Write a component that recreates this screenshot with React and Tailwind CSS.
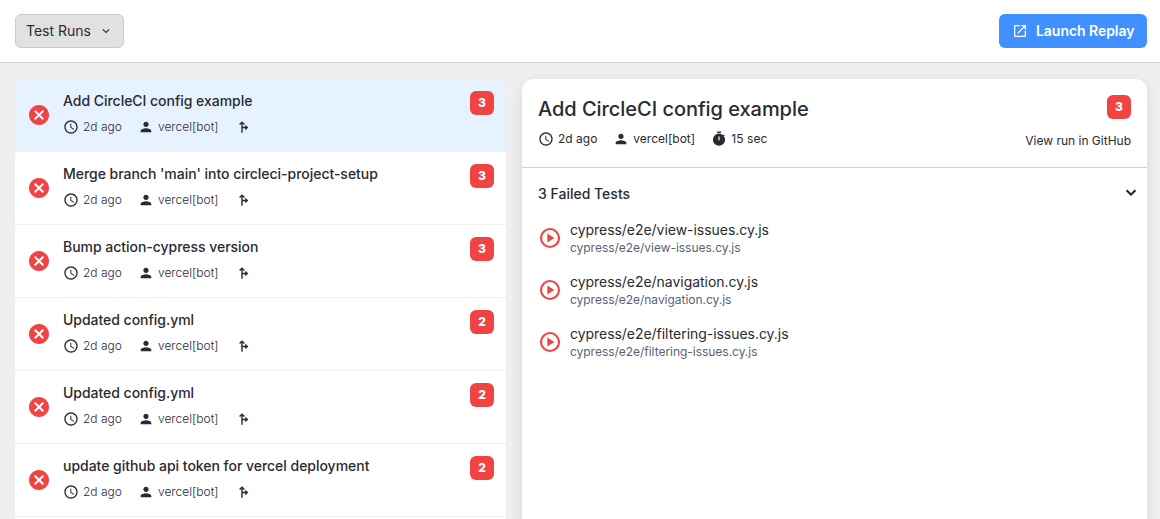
import { MdSchedule, MdPerson, MdCancel, MdLaunch, MdExpandMore } from "react-icons/md";

const RUNS = [
  { title: "Add CircleCI config example", fails: 3, selected: true },
  { title: "Merge branch 'main' into circleci-project-setup", fails: 3 },
  { title: "Bump action-cypress version", fails: 3 },
  { title: "Updated config.yml", fails: 2 },
  { title: "Updated config.yml", fails: 2 },
  { title: "update github api token for vercel deployment", fails: 2 },
];

const TESTS = [
  "cypress/e2e/view-issues.cy.js",
  "cypress/e2e/navigation.cy.js",
  "cypress/e2e/filtering-issues.cy.js",
];

function Badge({ count }) {
  return (
    <div className="flex h-6 w-6 shrink-0 items-center justify-center rounded-md bg-[#f04342] pb-px text-[12px] font-extrabold text-white">
      {count}
    </div>
  );
}

function BranchIcon() {
  return (
    <svg viewBox="0 0 12 14" className="h-3.5 w-3 shrink-0" fill="none" stroke="#2a2a33" strokeWidth="1.4">
      <path d="M4 12.8V2.5M4 7.5h4.5" />
      <path d="M1.6 4.6 4 2.2l2.4 2.4" />
      <path d="M7.2 4.8v5.4l3.2-2.7z" fill="#2a2a33" stroke="none" />
    </svg>
  );
}

function StopwatchIcon() {
  return (
    <svg viewBox="0 0 16 16" className="h-4 w-4 shrink-0">
      <path d="M6 1.2h4" stroke="#2a2a33" strokeWidth="1.4" />
      <path d="m12.1 3.9 1 1" stroke="#2a2a33" strokeWidth="1.4" />
      <circle cx="8" cy="8.7" r="6.1" fill="#2a2a33" />
      <path d="M8 5.4v3.8" stroke="#fff" strokeWidth="1.2" />
    </svg>
  );
}

function PlayIcon() {
  return (
    <svg viewBox="0 0 24 24" className="h-6 w-6 shrink-0">
      <circle cx="12" cy="12" r="9" fill="none" stroke="#f04342" strokeWidth="2.1" />
      <path d="M9.3 7.6v8.8l7.1-4.4z" fill="#f04342" />
    </svg>
  );
}

function Run({ run }) {
  return (
    <div className={`flex h-[73px] shrink-0 rounded-xs border-b border-[#efefef] px-3 ${run.selected ? "bg-[#e6f3ff]" : "bg-white"}`}>
      <MdCancel className="mt-6 h-6 w-6 shrink-0 text-[#f04342]" />
      <div className="ml-3 min-w-0 grow pt-3">
        <div className="text-[14px] leading-5 font-medium tracking-[-0.03px]">{run.title}</div>
        <div className="mt-[7px] flex h-[18px] items-center text-[12px] leading-[18px] font-light">
          <MdSchedule className="h-4 w-4 shrink-0" />
          <span className="ml-1">2d ago</span>
          <MdPerson className="ml-4 h-4 w-4 shrink-0" />
          <span className="mr-5 ml-1 tracking-[0.03px]">vercel[bot]</span>
          <BranchIcon />
        </div>
      </div>
      <div className="pt-3">
        <Badge count={run.fails} />
      </div>
    </div>
  );
}

export default function App() {
  return (
    <div className="flex h-[519px] w-[1160px] flex-col overflow-hidden bg-[#efefef] font-[Inter,sans-serif] text-[#2a2a33]">
      <header className="flex h-[63px] shrink-0 items-start justify-between border-b border-[#d0d0d3] bg-white pt-3.5 pr-[13px] pl-[15px]">
        <button className="flex h-[34px] w-[109px] items-center rounded-md border border-[#c9c9d2] bg-[#e1e1e1] pb-px pl-2.5 text-[14px]">
          Test Runs
          <MdExpandMore className="mt-px ml-2 h-3.5 w-3.5" />
        </button>
        <button className="flex h-[34px] w-[148px] items-center rounded-md bg-[#4190ff] pb-px pl-[13px] text-[14px] font-semibold tracking-[-0.05px] text-white">
          <MdLaunch className="mr-2 h-4 w-4" />
          Launch Replay
        </button>
      </header>

      <main className="flex grow items-start gap-4 overflow-hidden pt-4 pl-[15px]">
        <section className="flex h-[440px] w-[491px] flex-col overflow-hidden rounded-t-xl">
          {RUNS.map((run, i) => (
            <Run key={i} run={run} />
          ))}
          <div className="grow rounded-t-xs bg-white" />
        </section>

        <section className="h-[460px] w-[625px] rounded-t-xl bg-white shadow-[0_4px_14px_rgba(0,0,0,0.1)]">
          <div className="flex h-[89px] justify-between border-b border-[#cfcfd4] px-4 pt-4">
            <div>
              <h1 className="text-[20px] leading-7 font-medium tracking-[-0.04px]">Add CircleCI config example</h1>
              <div className="mt-[7px] flex h-[18px] items-center text-[12px] leading-[18px]">
                <MdSchedule className="h-4 w-4" />
                <span className="ml-1">2d ago</span>
                <MdPerson className="ml-4 h-4 w-4" />
                <span className="mr-4 ml-1">vercel[bot]</span>
                <StopwatchIcon />
                <span className="ml-1 tracking-[0.1px]">15 sec</span>
              </div>
            </div>
            <div className="flex flex-col items-end">
              <Badge count={3} />
              <a className="mt-[13px] text-[12px] leading-[18px]">View run in GitHub</a>
            </div>
          </div>
          <div className="flex items-center justify-between pt-4 pr-1.5 pl-4">
            <h2 className="text-[14px] leading-5 font-medium">3 Failed Tests</h2>
            <svg viewBox="0 0 20 20" className="h-5 w-5" fill="none" stroke="#1f1f28" strokeWidth="2">
              <path d="m5.6 6.3 4.4 4.4 4.4-4.4" />
            </svg>
          </div>
          <div className="flex flex-col gap-4 px-4 pt-4">
            {TESTS.map((test) => (
              <div key={test} className="flex h-9 items-center">
                <PlayIcon />
                <div className="ml-2">
                  <div className="text-[14px] leading-5 tracking-[-0.04px]">{test}</div>
                  <div className="text-[12px] leading-4 tracking-[-0.03px] text-[#5c5f78]">{test}</div>
                </div>
              </div>
            ))}
          </div>
        </section>
      </main>
    </div>
  );
}
